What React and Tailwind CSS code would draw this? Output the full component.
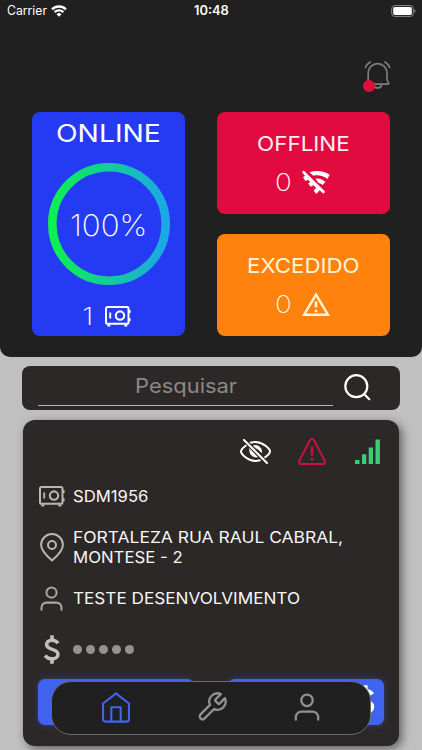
import { useLayoutEffect, useRef, useState } from "react";

function Fit({ width, className = "", children }) {
  const ref = useRef(null);
  const [scale, setScale] = useState(1);
  useLayoutEffect(() => {
    setScale(width / ref.current.offsetWidth);
  }, [width]);
  return (
    <span className={"block shrink-0 " + className} style={{ width }}>
      <span
        ref={ref}
        className="inline-block origin-left whitespace-nowrap align-top"
        style={{ transform: `scaleX(${scale})` }}
      >
        {children}
      </span>
    </span>
  );
}

function Safe({ className }) {
  return (
    <svg viewBox="0 0 26 21" className={className} fill="none" stroke="currentColor">
      <rect x="1" y="1" width="22.5" height="16.8" rx="1.6" strokeWidth="2" />
      <circle cx="15" cy="9.6" r="4.2" strokeWidth="2.1" />
      <path d="M5.2 6.5v6" strokeWidth="1.9" />
      <path d="M24.6 4v3M24.6 12.3v3" strokeWidth="1.9" />
      <path d="M3.8 18.5v1.9M20.8 18.5v1.9" strokeWidth="3" />
    </svg>
  );
}

function Person({ className }) {
  return (
    <svg viewBox="0 0 24 26" className={className} fill="none" stroke="currentColor" strokeWidth="2.1" strokeLinecap="round">
      <circle cx="12" cy="6.8" r="5.3" />
      <path d="M1.6 24.8v-2.3a5.2 5.2 0 0 1 5.2-5.2h10.4a5.2 5.2 0 0 1 5.2 5.2v2.3" />
    </svg>
  );
}

function Dollar({ className }) {
  return (
    <svg viewBox="0 0 16 29" className={className} fill="none" stroke="currentColor">
      <path d="M14 8.2C12.8 6.3 10.5 5.2 8 5.2c-3.2 0-5.4 1.7-5.4 4.3 0 6.2 11.4 3.4 11.4 9.7 0 2.8-2.7 4.6-6 4.6-2.9 0-5.4-1.2-6.9-3.3" strokeWidth="3.5" />
      <path d="M8 .3v5M8 23.5v5.2" strokeWidth="3.6" />
    </svg>
  );
}

function StatusBar() {
  return (
    <div className="flex h-[22px] items-center justify-between pl-[7px] pr-[6px] text-white">
      <div className="flex w-[150px] items-center gap-[4px]">
        <Fit width={40} className="font-['Inter'] text-[12.5px] leading-[22px]">Carrier</Fit>
        <svg viewBox="0 0 16 12" className="-mt-[1px] h-[12px] w-[16px]" fill="none" stroke="currentColor">
          <path d="M1.1 4.4a9.8 9.8 0 0 1 13.8 0" strokeWidth="2.4" />
          <path d="M3.6 7.1a6.3 6.3 0 0 1 8.8 0" strokeWidth="2.2" />
          <path d="M8 11.7 5.5 9.2a3.5 3.5 0 0 1 5 0z" fill="currentColor" stroke="none" />
        </svg>
      </div>
      <Fit width={35} className="font-['Inter'] text-[12.5px] font-semibold leading-[22px]">10:48</Fit>
      <div className="flex w-[150px] justify-end">
        <svg viewBox="0 0 25 12" className="-mt-[1px] h-[12px] w-[25px]">
          <rect x="0.7" y="0.6" width="21.6" height="10.8" rx="3" fill="none" stroke="#8a8a8a" />
          <rect x="2.2" y="2.1" width="18.6" height="7.8" rx="1.6" fill="#fff" />
          <path d="M23.4 4.3v3.4q1.2-.5 1.2-1.7t-1.2-1.7" fill="#8a8a8a" />
        </svg>
      </div>
    </div>
  );
}

function Bell() {
  return (
    <div className="relative ml-[363px] mt-[38px] h-[32px] w-[28px]">
      <svg viewBox="0 0 28 32" className="h-[32px] w-[28px]" fill="none" stroke="#7d7d7d" strokeWidth="1.7" strokeLinecap="round" strokeLinejoin="round">
        <path d="M5.2 16.500V13a9.400 9.400 0 0 1 18.800 0v6c0 1.500.4 2.500 1.500 3.800.7.800.2 1.400-.7 1.400H4.400c-.9 0-1.400-.6-.7-1.400 1.200-1.400 1.500-2.300 1.500-3.800z" />
        <path d="M10.500 24.500a4.100 4.100 0 0 0 8.100 0M2.500 7.300Q3.800 4 7.300 2M21.900 2q3.400 2 4.800 5.300" />
      </svg>
      <span className="absolute left-0 top-[20px] h-[12px] w-[12px] rounded-full bg-[#e20d3f]" />
    </div>
  );
}

function OnlineCard() {
  return (
    <div className="flex h-[224px] w-[153px] flex-col items-center rounded-[8px] bg-[#253bf3] text-white">
      <Fit width={105} className="mt-[8px] font-['Inter'] text-[24.5px] leading-[26px]">ONLINE</Fit>
      <div className="mt-[17px] grid h-[122px] w-[122px] place-items-center">
        <svg viewBox="0 0 122 122" className="col-start-1 row-start-1 h-[122px] w-[122px]" fill="none">
          <defs>
            <linearGradient id="ring" x1="0" y1="0" x2="1" y2="0">
              <stop offset="0" stopColor="#0df04f" />
              <stop offset="1" stopColor="#1ca8e6" />
            </linearGradient>
          </defs>
          <circle cx="61" cy="61" r="56.7" stroke="url(#ring)" strokeWidth="8.6" />
        </svg>
        <Fit width={77} className="col-start-1 row-start-1 mt-[2px] font-['Inter'] text-[30px] font-extralight leading-[32px]">100%</Fit>
      </div>
      <div className="mt-[17px] flex items-center gap-[12px] pr-[4px]">
        <Fit width={11} className="font-['Inter'] text-[24.5px] font-extralight leading-[28px]">1</Fit>
        <Safe className="h-[21px] w-[26px]" />
      </div>
    </div>
  );
}

function Counter({ title, width, color, className, children }) {
  return (
    <div className={"flex h-[102px] w-[173px] flex-col items-center rounded-[8px] " + className}>
      <Fit width={width} className="mt-[19px] font-['Inter'] text-[20.5px] leading-[25px]">{title}</Fit>
      <div className={"mt-[12px] flex items-center gap-[10px] pr-[2px] " + color}>
        <Fit width={17} className="font-['Inter'] text-[24.5px] font-extralight leading-[28px]">0</Fit>
        {children}
      </div>
    </div>
  );
}

function Row({ icon, className, children }) {
  return (
    <div className={"flex items-center " + className}>
      <div className="flex w-[27px] shrink-0 justify-center">{icon}</div>
      <div className="ml-[8px] font-['Inter'] text-[16px] leading-[20px] text-[#f8f6f6]">{children}</div>
    </div>
  );
}

function DeviceCard() {
  return (
    <section className="ml-[23px] mt-[10px] flex h-[326px] w-[376px] flex-col rounded-[12px] bg-[#2c2828] pl-[15px] shadow-[3px_3px_10px_rgba(0,0,0,0.5)]">
      <div className="mt-[17px] flex h-[28px] items-center pl-[202px]">
        <svg viewBox="0 0 31 25" className="h-[25px] w-[31px] text-white" fill="none" stroke="currentColor" strokeWidth="2" strokeLinecap="round" strokeLinejoin="round">
          <path d="M6.3 6.2C3.5 8.2 1 11 1 12.5c0 2.5 7 9.5 14.5 9.5 1.5 0 3-.3 4.3-.7M10.5 3.7c1.600-.5 3.300-.8 5-.8C23 2.900 30 10 30 12.500c0 1.400-2.300 4-5.400 6.100" />
          <path d="M10 9.800C8.800 13.500 11.500 18.800 17.500 18L9.800 9.800zM13.500 6.800c4-1.500 8.800 1.700 8 6.700l-3-2.700c-.5-1-1.200-1.400-2.300-1.500z" fill="currentColor" strokeWidth="0.800" />
          <path d="M4 1l23 23" stroke="#2c2828" strokeWidth="4" strokeLinecap="butt" />
          <path d="M4 1l23 23" />
        </svg>
        <svg viewBox="0 0 28 27" className="ml-[27px] h-[27px] w-[28px]" fill="none" stroke="#cb1240" strokeWidth="1.900" strokeLinecap="round" strokeLinejoin="round">
          <path d="M12.100 2 1.300 22.800a2.200 2.200 0 0 0 1.900 3.200h21.600a2.200 2.200 0 0 0 1.900-3.200L15.900 2a2.150 2.150 0 0 0-3.800 0z" />
          <path d="M14 9.500v7.300" strokeWidth="2.400" />
          <path d="M14 21.100v.1" strokeWidth="2.800" />
        </svg>
        <svg viewBox="0 0 26 26" className="ml-[29px] mt-[2px] h-[26px] w-[26px]" fill="#3ecb76">
          <path d="M0 21h4.500v4H0zM7 15.300h4.300V25H7zM13.700 8.600H18V25h-4.300zM20.500.5h4.400V25h-4.400z" />
        </svg>
      </div>
      <Row className="mt-[19px] h-[24px]" icon={<Safe className="mt-[1px] h-[21px] w-[26px] text-[#b9b6b6]" />}>
        <Fit width={75}>SDM1956</Fit>
      </Row>
      <Row
        className="mt-[19px] h-[40px]"
        icon={
          <svg viewBox="0 0 24 29" className="h-[29px] w-[24px] text-[#b9b6b6]" fill="none" stroke="currentColor" strokeWidth="2" strokeLinejoin="round">
            <path d="M12 27.500C9 24.700 1.100 18.600 1.100 11.800a10.900 10.700 0 0 1 21.800 0C22.900 18.600 15 24.700 12 27.500z" />
            <circle cx="12" cy="12" r="4" />
          </svg>
        }
      >
        <Fit width={270}>FORTALEZA RUA RAUL CABRAL,</Fit>
        <Fit width={110}>MONTESE - 2</Fit>
      </Row>
      <Row className="mt-[18px] h-[26px]" icon={<Person className="h-[25px] w-[23px] text-[#aaa7a7]" />}>
        <Fit width={227}>TESTE DESENVOLVIMENTO</Fit>
      </Row>
      <Row className="mt-[22px] h-[32px]" icon={<Dollar className="h-[29px] w-[16px] text-[#c2bfbf]" />}>
        <div className="flex gap-[4px]">
          {[0, 1, 2, 3, 4].map((i) => (
            <span key={i} className="h-[9px] w-[9px] rounded-full bg-[#959292]" />
          ))}
        </div>
      </Row>
      <div className="mt-[14px] flex gap-[34px]">
        <div className="h-[46px] w-[156px] rounded-[7px] bg-[#4164ef] shadow-[0_0_6px_rgba(65,100,239,0.4)]" />
        <div className="flex h-[46px] w-[156px] items-start justify-end rounded-[7px] bg-[#4164ef] pr-[9px] pt-[6px] text-white shadow-[0_0_6px_rgba(65,100,239,0.4)]">
          <Dollar className="h-[33px] w-[19px]" />
        </div>
      </div>
    </section>
  );
}

function NavBar() {
  return (
    <nav className="absolute left-[51px] top-[681px] flex h-[54px] w-[320px] items-center rounded-[20px] border border-[#6b6969] bg-[#202020] pl-[50px]">
      <svg viewBox="0 0 28 31" className="-mt-[2px] h-[31px] w-[28px]" fill="none" stroke="#4164ef" strokeWidth="2.1" strokeLinejoin="round">
        <path d="M1 11.500 14 1.300l13 10.200v15.500a2.600 2.600 0 0 1-2.600 2.600H3.600A2.600 2.600 0 0 1 1 27z" />
        <path d="M9.300 29.500V15.200h9.400v14.300" />
      </svg>
      <svg viewBox="1 1 22 22" className="-mt-[2px] ml-[67px] h-[30px] w-[30px]" fill="none" stroke="#929090" strokeWidth="1.7" strokeLinecap="round" strokeLinejoin="round">
        <path d="M14.7 6.3a1 1 0 0 0 0 1.4l1.6 1.6a1 1 0 0 0 1.4 0l3.77-3.77a6 6 0 0 1-7.94 7.94l-6.91 6.91a2.12 2.12 0 0 1-3-3l6.91-6.91a6 6 0 0 1 7.94-7.94l-3.76 3.76z" />
      </svg>
      <Person className="-mt-[2px] ml-[67px] h-[28px] w-[26px] text-[#929090]" />
    </nav>
  );
}

export default function App() {
  return (
    <main className="relative h-[750px] w-[422px] overflow-hidden bg-[#c1c0c0]">
      <header className="h-[357px] rounded-b-[10px] bg-[#202020]">
        <StatusBar />
        <Bell />
        <div className="mt-[20px] flex gap-[32px] pl-[32px]">
          <OnlineCard />
          <div className="flex flex-col justify-between">
            <Counter title="OFFLINE" width={93} className="bg-[#e20b3f] text-[#ffeef2]" color="text-white">
              <svg viewBox="0 0 28 25" className="h-[25px] w-[28px]" fill="currentColor">
                <path d="M7.500 2.200C14-.1 22 .6 27.600 4.700l-2.100 4.200C21.200 5.700 16.500 4.700 11.300 5.700z" />
                <path d="M13.500 8.600c3.300-.5 6.900.7 9.800 3.200l-2.600 3.300c-1.500-1.200-2.600-1.700-4.200-2z" />
                <path d="M1.700.4 23.300 21.700l-1.900 2-3.800-3.500-3.300 3.700-2.600-3.100 2.300-3-2.500-2.500-2.700 1.500-2.700-3.300 2.100-1.500-2.100-2.200-2.600 1.200L1 7.300l2-1.500L0 2.200z" />
              </svg>
            </Counter>
            <Counter title="EXCEDIDO" width={113} className="bg-[#ff820e] text-[#fff3d8]" color="text-[#fff3d8]">
              <svg viewBox="0 0 28 25" className="h-[25px] w-[28px]" fill="none" stroke="currentColor">
                <path d="M14 2.700 26 22.800H2z" strokeWidth="2.4" />
                <path d="M14 9.500v6M14 17.700v2.600" strokeWidth="2.6" />
              </svg>
            </Counter>
          </div>
        </div>
      </header>
      <div className="ml-[22px] mt-[9px] flex h-[44px] w-[378px] items-start rounded-[8px] bg-[#2c2828] pl-[16px]">
        <div className="flex h-[40px] w-[295px] justify-center border-b border-[#b5b3b3]">
          <Fit width={102} className="mt-[7px] font-['Inter'] text-[20px] leading-[26px] text-[#8b8888]">Pesquisar</Fit>
        </div>
        <svg viewBox="0 0 27 27" className="ml-[11px] mt-[8px] h-[27px] w-[27px]" fill="none" stroke="#fff" strokeWidth="2.2" strokeLinecap="round">
          <circle cx="12.3" cy="12.2" r="11" />
          <path d="m20.3 20.2 5 5" />
        </svg>
      </div>
      <DeviceCard />
      <NavBar />
    </main>
  );
}
